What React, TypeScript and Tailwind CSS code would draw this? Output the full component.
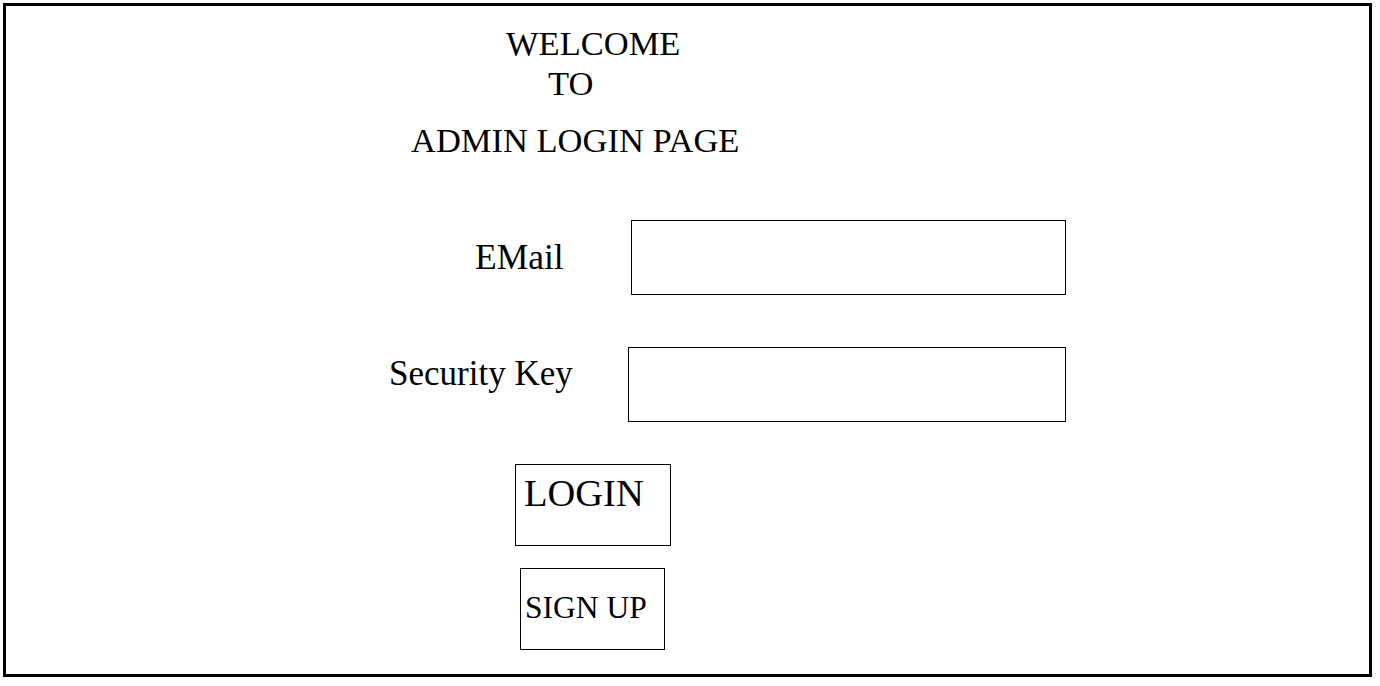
export default function App() {
  return (
    <div className="min-h-screen bg-white p-[3px] font-['Liberation_Serif',serif] text-black">
      <div className="w-[1369px] h-[674px] border-[3px] border-black">
        {/* heading */}
        <div className="ml-[500px] mt-[20px] text-[34.5px] leading-none">WELCOME</div>
        <div className="ml-[542px] mt-[5px] text-[34.5px] leading-none">TO</div>
        <div className="ml-[405px] mt-[23px] text-[34.5px] leading-none">ADMIN LOGIN PAGE</div>

        {/* email row */}
        <div className="flex items-start mt-[62px]">
          <label className="ml-[469px] w-[156px] mt-[20px] text-[35.5px] leading-none">EMail</label>
          <input type="email" className="w-[435px] h-[75px] border border-black outline-none px-2" />
        </div>

        {/* security key row */}
        <div className="flex items-start mt-[52px]">
          <label className="ml-[383px] w-[239px] mt-[9px] text-[35px] leading-none">Security Key</label>
          <input type="password" className="w-[438px] h-[75px] border border-black outline-none px-2" />
        </div>

        {/* buttons */}
        <button className="ml-[509px] mt-[42px] w-[156px] h-[82px] border border-black text-left pl-[8px] pt-[9px] text-[38.5px] leading-none flex items-start">
          LOGIN
        </button>
        <button className="ml-[514px] mt-[22px] w-[145px] h-[82px] border border-black text-left pl-[4px] pt-[23px] text-[31.5px] leading-none flex items-start">
          SIGN UP
        </button>
      </div>
    </div>
  );
}
